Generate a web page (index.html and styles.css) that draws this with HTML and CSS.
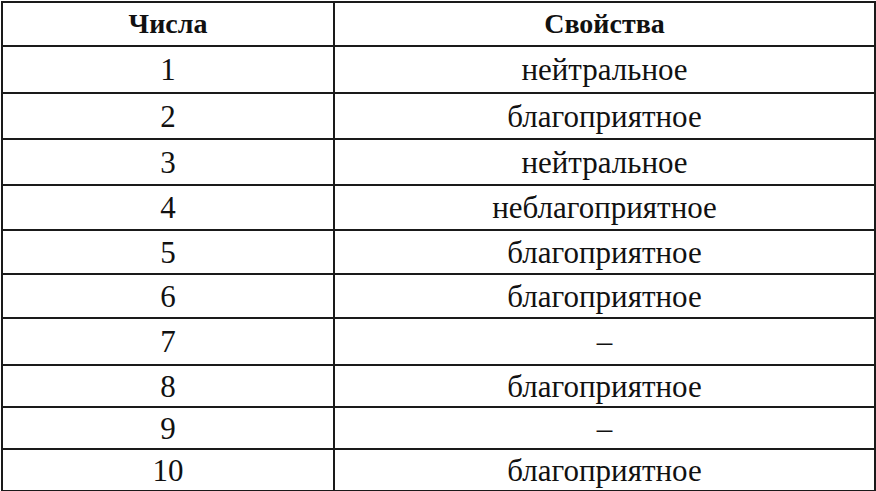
FILE: index.html
```html
<!DOCTYPE html>
<html lang="ru">
<head>
<meta charset="utf-8">
<link rel="stylesheet" href="styles.css">
</head>
<body>
<table class="tbl">
  <thead>
    <tr class="r0"><th class="c1">Числа</th><th class="c2">Свойства</th></tr>
  </thead>
  <tbody>
    <tr class="r1"><td>1</td><td>нейтральное</td></tr>
    <tr class="r2"><td>2</td><td>благоприятное</td></tr>
    <tr class="r3"><td>3</td><td>нейтральное</td></tr>
    <tr class="r4"><td>4</td><td>неблагоприятное</td></tr>
    <tr class="r5"><td>5</td><td>благоприятное</td></tr>
    <tr class="r6"><td>6</td><td>благоприятное</td></tr>
    <tr class="r7"><td>7</td><td>–</td></tr>
    <tr class="r8"><td>8</td><td>благоприятное</td></tr>
    <tr class="r9"><td>9</td><td>–</td></tr>
    <tr class="r10"><td>10</td><td>благоприятное</td></tr>
  </tbody>
</table>
</body>
</html>
```

FILE: styles.css
```css
html, body {
  margin: 0;
  padding: 0;
  background: #ffffff;
}
body {
  padding: 1px 0 0 1px;
}
.tbl {
  border-collapse: collapse;
  width: 875px;
  font-family: "Liberation Serif", "DejaVu Serif", serif;
  color: #111111;
  table-layout: fixed;
}
.tbl th, .tbl td {
  border: 2px solid #1a1a1a;
  text-align: center;
  vertical-align: middle;
  padding: 0;
  font-size: 31px;
  line-height: 1;
}
.tbl th {
  font-weight: bold;
  font-size: 28px;
}
.c1 { width: 330px; }
.r0 { height: 44px; }
.r1 { height: 47px; }
.r2 { height: 46px; }
.r3 { height: 46px; }
.r4 { height: 45px; }
.r5 { height: 44px; }
.r6 { height: 44px; }
.r7 { height: 47px; }
.r8 { height: 42px; }
.r9 { height: 42px; }
.r10 { height: 42px; }
```
